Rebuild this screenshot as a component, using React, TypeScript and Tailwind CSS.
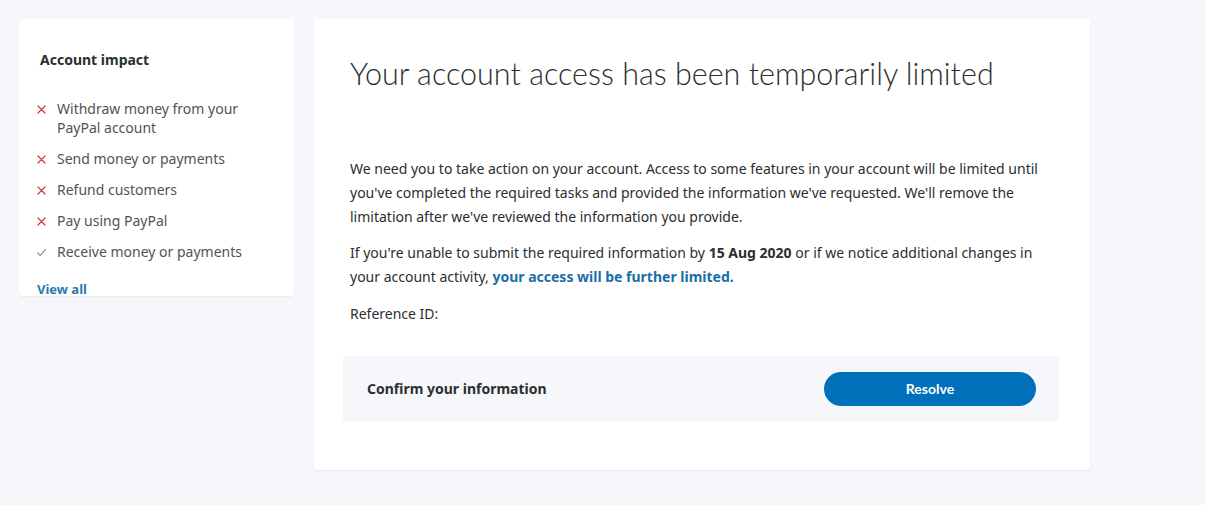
import React from "react";

const impacts = [
    { label: "Withdraw money from your PayPal account", allowed: false },
    { label: "Send money or payments", allowed: false },
    { label: "Refund customers", allowed: false },
    { label: "Pay using PayPal", allowed: false },
    { label: "Receive money or payments", allowed: true },
];

function Cross() {
    return (
        <svg width="9" height="9" viewBox="0 0 9 9" className="shrink-0 mt-[6px]">
            <path d="M1 1 L8 8 M8 1 L1 8" stroke="#d03f3f" strokeWidth="1.3" strokeLinecap="round" />
        </svg>
    );
}

function Check() {
    return (
        <svg width="9" height="9" viewBox="0 0 9 9" className="shrink-0 mt-[6px]">
            <path d="M0.8 5 L3.2 7.4 L8.4 1.6" stroke="#6f9a8a" strokeWidth="1.2" fill="none" strokeLinecap="round" />
        </svg>
    );
}

export default function App() {
    return (
        <div
            className="min-h-[505px] w-full bg-[#f5f7fa] text-[#2c2e2f]"
            style={{ fontFamily: '"Noto Sans", "Open Sans", sans-serif' }}>
            <div className="flex items-start gap-[20px] pl-[19px] pt-[19px]">
                {/* Account impact */}
                <div className="w-[275px] h-[277px] overflow-hidden rounded-[4px] bg-white shadow-[0_1px_2px_rgba(0,0,0,0.06)] pt-[31px]">
                    <h3 className="pl-[21px] text-[14px] leading-[20px] font-bold text-[#2c2e2f]">
                        Account impact
                    </h3>
                    <ul className="mt-[29px] flex flex-col gap-[12px] pl-[18px] pr-[30px]">
                        {impacts.map((item) => (
                            <li key={item.label} className="flex gap-[11px] text-[14px] leading-[19px] text-[#515354]">
                                {item.allowed ? <Check /> : <Cross />}
                                <span>{item.label}</span>
                            </li>
                        ))}
                    </ul>
                    <div className="mt-[19px] pl-[18px] text-[13px] leading-[19px] font-bold text-[#2a7ab0]">
                        View all
                    </div>
                </div>

                {/* Main card */}
                <div className="w-[776px] h-[451px] rounded-[4px] bg-white shadow-[0_1px_2px_rgba(0,0,0,0.06)] pt-[35px]">
                    <h1
                        className="pl-[36px] text-[30.5px] leading-[38px] font-light text-[#2c2e2f]"
                        style={{ fontFamily: "Lato, sans-serif" }}>
                        Your account access has been temporarily limited
                    </h1>
                    <div className="mt-[65px] pl-[36px] pr-[30px] text-[14px] leading-[24px]">
                        <p>
                            We need you to take action on your account. Access to some features in your account will be limited until
                            you've completed the required tasks and provided the information we've requested. We'll remove the
                            limitation after we've reviewed the information you provide.
                        </p>
                        <p className="mt-[12px]">
                            If you're unable to submit the required information by <b>15 Aug 2020</b> or if we notice additional changes in
                            your account activity, <b className="text-[#1a6ea8]">your access will be further limited.</b>
                        </p>
                        <p className="mt-[13px]">Reference ID:</p>
                    </div>
                    <div className="mt-[30px] ml-[29px] w-[716px] h-[65px] bg-[#f5f7fa] flex items-center justify-between pl-[24px] pr-[23px]">
                        <span className="text-[14px] font-bold text-[#2c2e2f]">Confirm your information</span>
                        <button
                            className="w-[212px] h-[34px] rounded-full bg-[#0070ba] text-white text-[14px] font-bold"
                            style={{ fontFamily: "Lato, sans-serif" }}>
                            Resolve
                        </button>
                    </div>
                </div>
            </div>
        </div>
    );
}
